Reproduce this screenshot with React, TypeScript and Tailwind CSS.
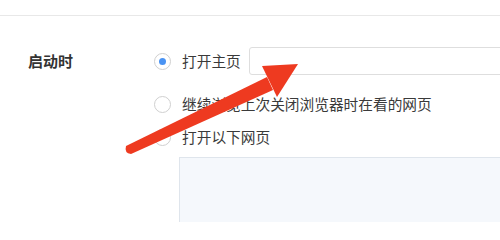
const font = { fontFamily: '"Noto Sans CJK SC", "Noto Sans", sans-serif' };

function Radio({ checked }: { checked?: boolean }) {
  return (
    <span className="w-[17px] h-[17px] shrink-0 rounded-full border border-[#d0d0d0] bg-white flex items-center justify-center">
      {checked && <span className="w-[7px] h-[7px] rounded-full bg-[#4a93f3]" />}
    </span>
  );
}

export default function App() {
  return (
    <div className="relative w-[500px] h-[222px] overflow-hidden bg-white text-[#333]" style={font}>
      <div className="h-[16px] border-b border-[#e8e8e8]" />

      <div className="flex pt-[31px]">
        <div className="w-[154px] shrink-0 pl-[28px] h-[28px] flex items-center text-[15px] font-bold text-[#333]">启动时</div>

        <div className="shrink-0 flex flex-col">
          <div className="flex items-center h-[28px]">
            <Radio checked />
            <span className="ml-[11px] text-[14.7px] text-[#3a3a3a] whitespace-nowrap">打开主页</span>
            <div className="ml-[8px] h-[28px] w-[320px] shrink-0 border border-[#dedede] rounded-[3px] bg-white" />
          </div>

          <div className="flex items-center h-[20px] mt-[19px]">
            <Radio />
            <span className="ml-[11px] text-[14.7px] text-[#3a3a3a] whitespace-nowrap">继续浏览上次关闭浏览器时在看的网页</span>
          </div>

          <div className="flex items-center h-[20px] mt-[13px]">
            <Radio />
            <span className="ml-[11px] text-[14.7px] text-[#3a3a3a] whitespace-nowrap">打开以下网页</span>
          </div>

          <div className="ml-[25px] mt-[10px] h-[120px] w-[380px] border border-[#dfe5ec] bg-[#f5f8fc]" />
        </div>
      </div>

      <svg className="absolute inset-0 pointer-events-none" width="500" height="222" viewBox="0 0 500 222">
        <path
          d="M126 146 L267 77 L273 90 L131 154 Q124 153 126 146 Z"
          fill="#ee3a20"
        />
        <polygon points="298,64 262,66 277,97" fill="#ee3a20" />
      </svg>
    </div>
  );
}
